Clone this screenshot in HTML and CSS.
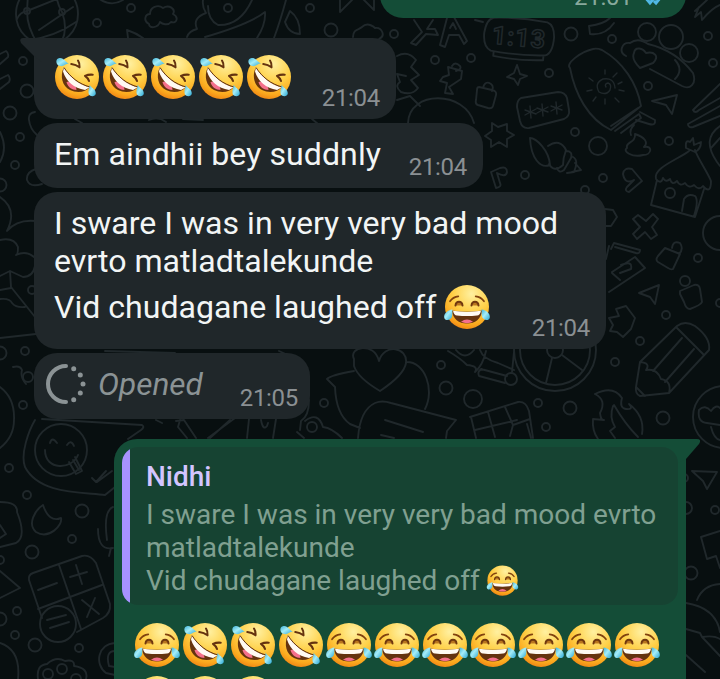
FILE: index.html
```
<!DOCTYPE html>
<html lang="en">
<head>
<meta charset="utf-8">
<title>Chat</title>
<link rel="stylesheet" href="styles.css">
</head>
<body>
<svg class="defs" aria-hidden="true">
  <defs>
    <radialGradient id="face" cx=".6" cy=".2" r=".85"><stop offset="0" stop-color="#fff0a0"/><stop offset=".5" stop-color="#ffd047"/><stop offset=".82" stop-color="#fba91e"/><stop offset="1" stop-color="#ee7f12"/></radialGradient>
    <linearGradient id="tear" x2="1" y2="1"><stop offset="0" stop-color="#3fb2d8"/><stop offset=".45" stop-color="#a5edf8"/><stop offset="1" stop-color="#27a5d3"/></linearGradient>
    <symbol id="rofl" viewBox="0 0 48 48">
      <circle cx="24" cy="24" r="22" fill="url(#face)"/>
      <path d="M10.500 15C7 23 9 33 17 37C24 40.500 33 39 36.500 34.500C26 31 18 25 10.500 15Z" fill="#65330f"/>
      <path d="M13.500 29C19 27.500 23 31.500 23.500 37C19 37 14.500 34 13.500 29Z" fill="#f4708b"/>
      <path d="M11 14.500C17 24 25 31 36.500 34.500L32 37C21 35 13 28.500 10 18.500Z" fill="#fffaf3"/>
      <path d="M11 14.500C17 24 26 31 37 34" fill="none" stroke="#65330f" stroke-width="1"/>
      <path d="M18.300 11Q23 11.500 26.500 14.300Q26.800 10 25 7.500M39.700 21.700Q35.500 21.300 32 22.900Q35 25 36 28" fill="none" stroke="#65330f" stroke-width="2.100" stroke-linecap="round" stroke-linejoin="round"/>
      <path d="M16 10.500C13 10 11 14 7 13C2.500 12 2 5.500 6.500 5C11 4.500 12 9 16 10.500Z" fill="url(#tear)"/>
      <path d="M36.500 31.500C37.500 34.500 43 36 42.800 40.500C42.300 44.500 36 44 35.500 40C35 37 37 34.500 36.500 31.500Z" fill="url(#tear)"/>
    </symbol>
    <symbol id="joy" viewBox="0 0 48 48">
      <circle cx="24" cy="24" r="22" fill="url(#face)"/>
      <path d="M7 18.300Q10 13.800 15.300 13.300M41 18.300Q38 13.800 32.700 13.300" fill="none" stroke="#81420e" stroke-width="1.700" stroke-linecap="round"/>
      <path d="M12.500 22.500C13 17.500 19 17.500 19.500 22.500M28.500 22.500C29 17.500 35 17.500 35.500 22.500" fill="#b9761f" stroke="#70380f" stroke-width="2" stroke-linecap="round"/>
      <path d="M9 27.500Q24 30 39 27.500C38.500 36 32 40.500 24 40.500C16 40.500 9.500 36 9 27.500Z" fill="#65330f"/>
      <path d="M10 27.800Q24 30 38 27.800C37.500 31 36 32.500 34 32.500Q24 33.700 14 32.500C12 32.500 10.500 31 10 27.800Z" fill="#fffaf3"/>
      <path d="M18 38.800Q24 34 30 38.800Q24 41.500 18 38.800Z" fill="#f4708b"/>
      <path d="M9.500 26.500C4.500 27 .500 31 1.200 34.500C2 38.500 8 37.500 9 33.500C9.700 31 9 29 9.500 26.500Z" fill="url(#tear)"/>
      <path d="M38.500 26.500C43.500 27 47.500 31 46.800 34.500C46 38.500 40 37.500 39 33.500C38.300 31 39 29 38.500 26.500Z" fill="url(#tear)"/>
    </symbol>
  </defs>
</svg>

<svg class="wallpaper" viewBox="0 0 720 679" aria-hidden="true">
  <!-- globe, cloud and whale -->
  <circle cx="47" cy="14" r="31"/><path d="M28 -6L27 11Q27 28 38 44M27 11L62 -3M27 11Q20 12 17 19M25 41Q55 37 76 22M39 30L73 7M62 12Q55 0 57 -10M62 12Q68 28 62 41"/><circle cx="27" cy="11" r="3"/><circle cx="62" cy="12" r="3"/>
  <path d="M149 24C143 21 145 14 150 14C150 7 158 4 163 8C169 4 176 9 173 14C179 17 177 24 171 22C168 26 162 24 160 22C158 28 149 29 149 24ZM97 -3Q110 8 123 0M128 38L127 30Q136 33 143 38"/>
  <path d="M203 0Q202 7 206 13Q192 18 197 29Q189 31 187 37M208 6Q208 20 218 25Q240 26 252 0M205 37Q250 24 265 12Q266 24 257 38M286 0Q280 22 274 38M285 22Q289 34 300 34Q300 18 290 11L285 22M340 -3L340 12L354 -2M361 -3L374 10L374 -3M353 37C353 29 359 30 362 27C368 21 375 28 375 28C382 27 386 36 379 39"/>
  <!-- small circles -->
  <g><circle cx="97" cy="23" r="4"/><circle cx="131" cy="8" r="4"/><circle cx="228" cy="8" r="4"/><circle cx="310" cy="8" r="4"/><circle cx="331" cy="30" r="6.500"/><circle cx="394" cy="34" r="4"/><circle cx="23" cy="61" r="4"/><circle cx="27" cy="91" r="6.500"/><circle cx="10" cy="113" r="6.500"/><circle cx="20" cy="137" r="4"/><circle cx="15" cy="165" r="4"/><circle cx="0" cy="185" r="6.500"/><circle cx="435" cy="60" r="4"/><circle cx="471" cy="58" r="4"/><circle cx="549" cy="73" r="4"/><circle cx="571" cy="34" r="6.500"/><circle cx="612" cy="39" r="4"/><circle cx="708" cy="36" r="4"/><circle cx="713" cy="63" r="4"/><circle cx="648" cy="86" r="4"/><circle cx="575" cy="132" r="4"/><circle cx="598" cy="146" r="9"/><circle cx="669" cy="141" r="4"/><circle cx="525" cy="175" r="4"/><circle cx="603" cy="178" r="4"/><circle cx="698" cy="258" r="4"/><circle cx="666" cy="315" r="4"/><circle cx="640" cy="341" r="4"/><circle cx="615" cy="362" r="4"/><circle cx="720" cy="303" r="4"/><circle cx="720" cy="233" r="17"/><circle cx="585" cy="190" r="4"/><circle cx="570" cy="408" r="6.500"/><circle cx="663" cy="418" r="6.500"/><circle cx="538" cy="403" r="4"/><circle cx="546" cy="427" r="4"/><circle cx="324" cy="403" r="4"/><circle cx="441" cy="365" r="4"/><circle cx="446" cy="388" r="6.500"/><circle cx="473" cy="399" r="9"/><circle cx="0" cy="353" r="6.500"/><circle cx="25" cy="351" r="4"/><circle cx="32" cy="290" r="4"/><circle cx="23" cy="405" r="4"/><circle cx="9" cy="468" r="4"/><circle cx="27" cy="495" r="4"/><circle cx="82" cy="511" r="6.500"/><circle cx="72" cy="539" r="4"/><circle cx="32" cy="552" r="6.500"/><circle cx="0" cy="560" r="4"/><circle cx="17" cy="611" r="4"/><circle cx="0" cy="619" r="6.500"/><circle cx="15" cy="635" r="4"/><circle cx="35" cy="645" r="6.500"/><circle cx="79" cy="648" r="4"/><circle cx="686" cy="508" r="6"/><circle cx="715" cy="510" r="4"/><circle cx="691" cy="573" r="6.500"/><circle cx="684" cy="478" r="4"/></g>
  <!-- left edge -->
  <path d="M0 54L6 51Q9 53 8 57L0 64M0 79L8 75Q11 78 9 82L0 89M0 132Q8 148 0 162M35 112Q28 113 29 120Q30 129 37 135M36 169Q26 172 27 180Q30 188 42 184M0 197Q18 209 7 231Q17 219 36 221M0 240Q14 237 18 247Q18 255 16 255Q26 250 34 257M0 276L10 271L23 277Q33 277 35 266M10 271L11 287L35 317M0 290L11 288M0 299Q10 298 12 303Q16 308 25 307M0 338L36 334M13 367Q20 365 22 370Q20 377 26 384M0 387Q15 398 14 420Q14 437 0 448M75 119L82 123M149 120Q158 116 166 122M183 119L203 120M312 119L318 124M105 351L175 353M279 351L290 356"/>
  <circle cx="28" cy="377" r="5"/>
  <!-- letters, clock, stars and lock -->
  <path d="M414 20L422 32L411 43L416 45L426 34L438 35L435 29L427 29L433 20M447 18L440 45L445 47L449 35L459 35L464 44L467 41L454 17M450 28L453 23L456 29M475 20L483 22"/>
  <g transform="rotate(5 519 37)"><path d="M492 20Q519 17 546 20Q553 22 554 34Q554 50 547 53Q519 56 492 53Q484 50 484 36Q485 22 492 20M495 54L495 58Q520 61 545 58L545 54"/><text x="492" y="46" class="clock-label">1:13</text></g>
  <path d="M589 26Q604 24 610 18M589 26L590 34Q605 36 614 23"/>
  <path d="M517 65L520 74L527 76L520 79L518 85L514 79L507 77L514 73ZM440 81L447 83L445 93L453 94L449 87L461 79L462 71L448 67L449 75L443 77ZM452 66Q455 61 460 66Q462 69 456 71M479 87L492 90Q497 91 496 95L493 106Q492 109 488 108L478 105Q475 104 476 100L477 90Q477 87 479 87M483 88Q485 80 491 84Q494 86 492 91"/>
  <path d="M397 56Q408 50 416 60L411 67L419 75L411 80L418 88Q412 96 401 92Q394 86 400 82L397 74L406 76M397 100L410 96L420 106M408 123C409 90 465 90 474 123"/>
  <!-- ticket, shell, star and board -->
  <path d="M521 98L558 92Q565 92 567 98L569 110Q570 116 564 119L529 128Q522 129 520 121L517 107Q517 100 521 98Z"/>
  <path class="thin" d="M530 106L531 118M525 110L536 114M525 115L536 109M542 104L543 116M537 108L548 112M537 113L548 107M556 102L557 114M551 106L562 110M551 111L562 105"/>
  <path d="M492 123L498 127L507 124L507 131L514 135L507 139L507 147L499 142L491 147L491 140L485 136L492 131ZM530 138C536 138 549 150 550 165C540 169 531 158 530 138ZM548 146Q560 138 566 150Q563 158 563 165Q554 173 549 164M566 151Q573 151 571 158L564 170Q559 174 557 168M573 157Q579 160 574 172L567 173M575 163L581 170L572 172M491 172L496 188Q502 187 500 183L497 173Q506 178 507 172Q507 166 500 168ZM623 174Q624 167 632 169L642 181L629 192Q624 191 627 187L634 180Q625 185 623 174"/>
  <path d="M593 49C580 52 565 64 570 68C575 94 588 119 611 130L641 106C637 83 623 62 602 50Q597 48 593 49M611 126L638 108M615 131L639 114L641 118L621 133M640 112L655 120Q656 126 649 124L636 120M634 125Q629 130 631 135"/>
  <path d="M606 87Q604 84 608 83Q612 84 610 90Q606 96 599 92Q594 83 603 79Q614 77 615 88" class="thin"/><path class="thin" d="M605 74L605 70M613 77L617 73M618 84L622 82M619 90L624 91M615 98L619 102M605 99L605 104M596 97L593 101M592 90L587 91M593 81L589 78"/>
  <!-- hand with bubbles -->
  <path d="M626 56C618 52 622 42 630 43Q638 37 648 44C665 48 680 56 693 73C697 84 690 90 682 86L650 69M634 53C635 46 643 48 646 53C654 51 660 56 653 63L640 68Q631 59 634 53M675 60Q684 70 675 79M695 11L707 0M699 7L695 17L701 12L702 20Q712 8 720 5"/><circle cx="647" cy="32" r="9"/><circle cx="671" cy="37" r="12"/><circle cx="689" cy="53" r="9"/>
  <path d="M652 101L677 95L672 114L666 105ZM720 84L693 110Q695 114 699 110L720 98M720 106L688 124Q688 128 693 127L720 116M627 148C625 141 636 144 635 134C644 137 649 142 644 147C653 145 652 155 643 155C632 158 622 151 627 148ZM720 126Q701 139 717 162L720 166M720 138L711 148"/>
  <!-- hut -->
  <path d="M689 151C681 158 652 168 656 179Q661 185 663 178Q666 183 670 179Q672 186 677 181Q680 187 685 183Q689 189 694 185Q699 191 703 186Q711 195 711 181C707 171 698 159 695 150M686 148Q685 139 690 142L693 138L694 145L701 142Q701 149 695 152ZM657 180L651 205L695 217L704 189M682 211L684 199Q688 193 695 196Q699 200 694 216"/><circle cx="670" cy="193" r="5"/>
  <!-- right hand side shapes -->
  <path d="M605 209L613 210L617 217L611 226L604 226M638 215L646 221L653 214L658 219L652 227L657 235L651 239L645 232L637 239L633 234L640 227L633 219ZM665 248L680 254L673 269Q671 270 668 268L658 262Q655 260 658 256ZM672 248Q673 240 680 243Q684 249 679 254M680 291L694 285Q699 284 700 289L702 302Q701 305 690 309Q686 309 684 302L680 294Z"/><circle cx="685" cy="281" r="5"/>
  <path d="M639 293L659 285L655 304L650 297ZM611 249L614 243L640 250Q640 254 636 253L615 247M612 272L635 257L645 268L609 292M606 259L609 246M612 273L620 280M621 265Q633 260 631 269L620 273M609 318L619 316L616 309L626 306L635 318L631 329L623 337L617 332L610 331L613 325Z"/>
  <path d="M636 387L640 362L677 326Q685 320 695 326Q711 338 709 350L669 393L640 396Q635 394 636 387ZM640 362Q651 363 646 370Q657 368 661 379Q672 381 669 393M676 327L704 355M653 371L682 338M665 382L694 349M636 387L645 396"/>
  <circle cx="555" cy="350" r="41"/><circle cx="555" cy="350" r="35"/><circle cx="555" cy="350" r="8"/><path d="M552 358L546 383M562 355L582 370M480 350Q483 359 498 363L514 370M481 369L507 376M474 350Q465 361 456 350M448 351Q460 358 467 365Q479 366 475 372Q483 365 486 351M514 352L512 372M482 369Q477 371 479 376L505 383"/><circle cx="511" cy="379" r="6"/>
  <path d="M595 394Q613 385 622 398Q619 408 626 409Q634 410 629 404Q645 416 642 434M595 394Q607 400 600 413Q601 421 604 420L593 419Q592 431 598 439M614 405Q625 424 638 437M613 406Q609 417 615 427L610 431L615 438"/>
  <circle cx="724" cy="417" r="31"/><path d="M699 410Q705 404 711 411Q716 404 720 408M699 410Q697 422 707 423L720 425M711 427Q714 439 720 440M692 471L717 472L707 489L703 481ZM720 531L701 537L707 559L716 556L720 568M686 603Q716 608 720 632M697 600Q703 585 720 584M686 629L700 633L702 637Q714 635 720 639M702 637L720 656M686 655L705 672"/>
  <!-- heart bubble, note and calculator -->
  <path d="M354 371Q331 375 327 379L335 387Q336 414 350 424L360 428M354 359C348 347 374 341 379 361C384 343 408 347 406 363Q404 375 380 391Q358 378 354 366ZM406 362C425 361 435 390 425 409M358 438Q360 410 375 403Q382 400 391 403L456 420L447 431L446 438M385 420L423 432M381 435L394 438M470 417L518 402Q526 401 529 411L533 438M471 417L476 438M488 412L495 437M505 407L513 425L530 419M475 430L517 420M513 425L510 436M527 424L531 438"/>
  <!-- lower left doodles -->
  <path d="M35 420C29 430 20 454 25 467C39 494 80 492 105 495L115 487M42 419L142 425Q145 427 141 430L128 439M156 420L162 423M176 421L184 420L196 438M180 420L178 427L187 438M208 438L235 418M210 438L230 420M249 419L247 438M276 419L273 438M261 420Q263 431 267 426L268 423M297 432L304 438"/><circle cx="61" cy="450" r="26"/><path d="M50 443Q52 436 57 443M67 445Q71 439 74 446M45 450C45 471 72 470 78 455M69 462L76 474L82 471L75 457M73 460L79 470M92 478L96 482L106 471M97 482L112 471"/>
  <path d="M43 505C35 510 27 524 36 532C49 540 63 525 61 518Q49 523 43 505ZM0 502Q18 502 17 512Q27 537 16 543L0 547M0 525L6 534L0 538M0 571L20 588L0 598M113 507Q103 511 107 540M98 529Q98 551 113 548M111 548L109 556"/>
  <path d="M33 573L82 556Q90 554 96 563L110 604Q111 613 103 618L77 632M29 580L42 618M29 580Q28 575 33 573M38 609L102 585M59 565L81 629M38 590L57 583M70 577L87 572M76 565L82 584M82 600L99 614M95 598L87 617M47 620L66 615M50 628L69 622"/><circle cx="58" cy="624" r="18"/>
  <path d="M0 643Q21 650 18 679M38 679Q36 665 47 664Q56 656 65 661Q75 659 74 666Q89 668 86 679M115 643C98 644 94 664 106 673L115 675M115 651Q105 651 109 666L115 667"/><circle cx="62" cy="669" r="5"/><circle cx="48" cy="674" r="5"/><circle cx="76" cy="679" r="5"/>
  <path d="M309 400Q309 416 301 421L300 430M305 421Q318 411 323 427Q332 428 342 438"/><circle cx="312" cy="427" r="5"/>
</svg>

<main class="chat">
  <article class="bubble out clipped">
    <svg class="fragment" viewBox="0 0 20 10"><ellipse cx="10" cy="2" rx="8" ry="5"/></svg>
    <time>21:01</time>
    <svg class="ticks" viewBox="0 0 24 18"><path d="M2 8L8 15L19 2M12 13L14 15L23 4"/></svg>
  </article>

  <article class="bubble in emojis">
    <svg class="tail" viewBox="0 0 22 24"><path d="M3 0H22V24L14 18L1 5Q-1 0 3 0Z"/></svg>
    <div class="emoji-row"><svg><use href="#rofl"/></svg><svg><use href="#rofl"/></svg><svg><use href="#rofl"/></svg><svg><use href="#rofl"/></svg><svg><use href="#rofl"/></svg></div>
    <time>21:04</time>
  </article>

  <article class="bubble in short">
    <p>Em aindhii bey suddnly</p>
    <time>21:04</time>
  </article>

  <article class="bubble in long">
    <p>I sware I was in very very bad mood<br>evrto matladtalekunde<br><span class="last">Vid chudagane laughed off<svg><use href="#joy"/></svg></span></p>
    <time>21:04</time>
  </article>

  <article class="bubble in opened">
    <svg class="once" viewBox="0 0 44 44"><path d="M23 4A18 18 0 1 0 23 40"/><g><circle cx="30.700" cy="6.700" r="2.500"/><circle cx="37.300" cy="13" r="2.500"/><circle cx="40" cy="22" r="2.500"/><circle cx="37.300" cy="31" r="2.500"/><circle cx="30.700" cy="37.700" r="2.500"/></g></svg>
    <em>Opened</em>
    <time>21:05</time>
  </article>

  <article class="bubble out reply">
    <svg class="tail right" viewBox="0 0 22 24"><path d="M0 0H19Q24 0 21 5L8 20L0 24Z"/></svg>
    <blockquote>
      <strong>Nidhi</strong>
      <p>I sware I was in very very bad mood evrto<br>matladtalekunde<br><span class="quote-last">Vid chudagane laughed off<svg><use href="#joy"/></svg></span></p>
    </blockquote>
    <div class="emoji-row">
      <svg><use href="#joy"/></svg><svg><use href="#rofl"/></svg><svg><use href="#rofl"/></svg><svg><use href="#rofl"/></svg><svg><use href="#joy"/></svg><svg><use href="#joy"/></svg><svg><use href="#joy"/></svg><svg><use href="#joy"/></svg><svg><use href="#joy"/></svg><svg><use href="#joy"/></svg><svg><use href="#joy"/></svg>
      <svg><use href="#joy"/></svg><svg><use href="#joy"/></svg><svg><use href="#joy"/></svg>
    </div>
  </article>
</main>
</body>
</html>
```
FILE: styles.css
```
* { box-sizing: border-box; }
html, body { width: 720px; height: 679px; overflow: hidden; }
body { margin: 0; background: #080f10; font-family: Roboto, "Liberation Sans", sans-serif; position: relative; }
p, blockquote { margin: 0; }
.defs { position: absolute; width: 0; height: 0; }
.wallpaper { position: absolute; inset: 0; width: 720px; height: 679px; fill: none; stroke: #20282b; stroke-width: 1.9; stroke-linecap: round; stroke-linejoin: round; }
.wallpaper .thin { stroke-width: 1.4; }
.clock-label { font: bold 25px Roboto, sans-serif; letter-spacing: 1px; stroke-width: 1.5; }
.chat { position: relative; display: flex; flex-direction: column; height: 679px; overflow: hidden; }
.bubble { position: relative; flex: none; display: flex; justify-content: space-between; border-radius: 23px; color: #f2f5f5; }
.in { margin-left: 34px; background: #20272a; }
.out { align-self: flex-end; margin-right: 34px; background: #144d37; }
time { align-self: flex-end; color: #8b9093; font-size: 24px; line-height: 28px; letter-spacing: -.3px; }
.clipped { width: 306px; height: 61px; margin-top: -43px; padding: 0 19px 7px; justify-content: flex-start; }
.clipped time { margin-left: 155px; color: #87a99c; }
.ticks { align-self: flex-end; width: 24px; height: 18px; margin: 0 0 5px 10px; fill: none; stroke: #50b8e5; stroke-width: 3; }
.fragment { align-self: flex-end; width: 20px; height: 10px; margin-bottom: 8px; fill: #87a99c; }
.tail { position: absolute; left: -14px; top: 0; width: 22px; height: 24px; fill: #20272a; }
.tail.right { left: auto; right: -14px; fill: #144d37; }
.emoji-row { display: flex; flex-wrap: wrap; }
.emoji-row svg { display: block; width: 48px; height: 48px; flex: none; }
.emojis { width: 362px; height: 81px; margin-top: 20px; padding: 15px 16px 7px 19px; border-top-left-radius: 0; }
.short { width: 449px; height: 65px; margin-top: 4px; padding: 12px 16px 7px 20px; }
.bubble > p { font-size: 32.1px; line-height: 38px; white-space: nowrap; }
.short > p { letter-spacing: .06px; }
.long { width: 572px; height: 157px; margin-top: 4px; padding: 12px 16px 7px 20px; }
.long > p { width: 0; }
.last, .quote-last { display: flex; align-items: center; }
.last { height: 54px; }
.last svg { width: 48px; height: 48px; margin-left: 7px; flex: none; }
.opened { width: 276px; height: 66px; margin-top: 4px; padding: 0 12px 7px 10px; justify-content: flex-start; }
.once { width: 44px; height: 44px; margin: 9px 0 0 -1px; }
.once path { fill: none; stroke: #8b9395; stroke-width: 4; stroke-linecap: round; }
.once g { fill: #8b9395; }
.opened em { margin: 13px 0 0 11px; color: #8b9395; font-size: 31.5px; line-height: 38px; }
.opened time { margin-left: auto; }
.reply { width: 572px; height: 300px; margin-top: 20px; padding: 8px; display: block; border-top-right-radius: 0; }
blockquote { height: 158px; border-radius: 16px; overflow: hidden; background: linear-gradient(to right, #a792ff 8px, #164332 8px); padding: 13px 0 0 24px; white-space: nowrap; }
blockquote strong { display: block; color: #d3c5ff; font-size: 28px; line-height: 33px; font-weight: 500; }
blockquote p { margin-top: 5px; color: #80a091; font-size: 28px; line-height: 33px; }
.quote-last { height: 33px; }
.quote-last svg { width: 33px; height: 33px; margin-left: 6px; flex: none; }
.reply .emoji-row { width: 545px; padding: 16px 0 0 11px; row-gap: 5px; }
```
